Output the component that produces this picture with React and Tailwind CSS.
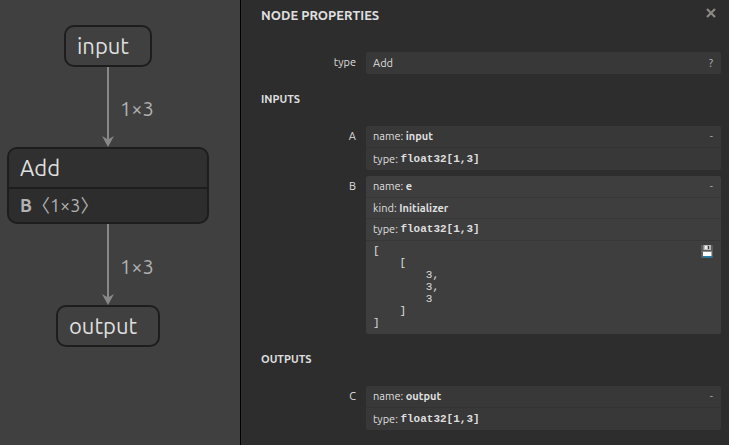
import React from "react";

function Edge({ className, label }) {
  return (
    <div className={`absolute w-3 ${className}`}>
      <svg className="h-full w-full overflow-visible" aria-hidden="true">
        <path d="M6 0V76" stroke="#888888" strokeWidth="2" />
        <path d="M0 70L6 81L12 70L6 73.500Z" fill="#888888" />
      </svg>
      <span className="absolute top-8 left-[18px] text-[20px] leading-[22px] text-[#b2b2b2]">{label}</span>
    </div>
  );
}

function GraphNode({ className, children }) {
  return (
    <div className={`absolute overflow-hidden rounded-[10px] border-2 border-[#1d1d1d] text-[22px] leading-[38px] text-[#dfdfdf] ${className}`}>
      {children}
    </div>
  );
}

function Graph() {
  return (
    <main className="relative w-[241px] shrink-0 border-r border-black bg-[#404040]">
      <Edge className="top-[66px] left-[102px] h-[81px]" label="1×3" />
      <Edge className="top-[224px] left-[102px] h-[81px]" label="1×3" />
      <GraphNode className="top-[25px] left-16 w-[88px] pl-[11px]">input</GraphNode>
      <GraphNode className="top-[147px] left-[7px] w-[202px] bg-[#2d2d2d]">
        <div className="border-b-2 border-[#1d1d1d] bg-[#303030] pl-[11px]">Add</div>
        <div className="pl-[11px] text-[18px] leading-[33px] text-[#b2b2b2]">
          <b>B</b>
          {"〈1×3〉"}
        </div>
      </GraphNode>
      <GraphNode className="top-[305px] left-14 w-[104px] pl-[11px]">output</GraphNode>
    </main>
  );
}

function Property({ label, children }) {
  return (
    <div className="flex">
      <dt className="w-[95px] shrink-0 text-right leading-5">{label}</dt>
      <dd className="ml-[10px] min-w-0 flex-1">{children}</dd>
    </div>
  );
}

function Row({ name, value, mono, compact, toggle }) {
  return (
    <div className={`flex items-center px-[7px] ${compact ? "h-[21px]" : "h-[22px]"}`}>
      <span>{name}:&nbsp;</span>
      <b className={mono ? "font-['Liberation_Mono',monospace]" : ""}>{value}</b>
      {toggle && <button type="button" aria-label="Collapse" className="ml-auto pr-px text-[#aaaaaa]">-</button>}
    </div>
  );
}

function Floppy() {
  return (
    <svg viewBox="0 0 12 13" className="h-[13px] w-3" aria-hidden="true">
      <rect width="12" height="13" rx="1" fill="#5b5b5b" />
      <rect x="2.500" y="0" width="7.500" height="5" fill="#b8b8b8" />
      <rect x="4" y="1" width="2" height="3" fill="#eeeeee" />
      <rect x="7" y="1" width="1" height="3" fill="#333333" />
      <rect x="1.500" y="6" width="9.500" height="1" fill="#8c8c8c" />
      <rect x="2" y="7" width="8.500" height="4" fill="#ffffff" />
      <rect x="2" y="11" width="8.500" height="1.500" fill="#1685b5" />
    </svg>
  );
}

const tensor = `[
    [
        3,
        3,
        3
    ]
]`;

function Sidebar() {
  return (
    <aside className="min-w-0 flex-1 bg-[#2d2d2d] pr-2 pl-5 text-[11px] text-[#dfdfdf]">
      <header className="flex h-[52px] items-start justify-between">
        <h1 className="pt-[5px] text-[13px] leading-5 font-semibold">NODE PROPERTIES</h1>
        <button type="button" aria-label="Close" className="mt-2 mr-[5px]">
          <svg viewBox="0 0 10 10" className="size-[10px]" aria-hidden="true">
            <path d="M1 1L9 9M9 1L1 9" stroke="#8c8a86" strokeWidth="2.200" />
          </svg>
        </button>
      </header>
      <dl>
        <Property label="type">
          <div className="flex h-[22px] items-center justify-between rounded-xs bg-[#383838] px-[7px]">
            <span>Add</span>
            <button type="button" aria-label="Documentation" className="pr-px text-[#b8b8b8]">?</button>
          </div>
        </Property>
      </dl>
      <h2 className="mt-[15px] mb-[17px] leading-5 font-bold">INPUTS</h2>
      <dl className="flex flex-col gap-[6px]">
        <Property label="A">
          <div className="divide-y divide-[#333333] rounded-xs bg-[#383838]">
            <Row name="name" value="input" toggle />
            <Row name="type" value="float32[1,3]" mono />
          </div>
        </Property>
        <Property label="B">
          <div className="divide-y divide-[#373737] rounded-xs bg-[#3e3e3e]">
            <Row name="name" value="e" toggle />
            <Row name="kind" value="Initializer" compact />
            <Row name="type" value="float32[1,3]" mono />
            <div className="flex items-start justify-between px-[7px] pt-1 pb-[5px]">
              <pre className="font-['Liberation_Mono',monospace] leading-3">{tensor}</pre>
              <button type="button" aria-label="Save tensor" className="mr-px">
                <Floppy />
              </button>
            </div>
          </div>
        </Property>
      </dl>
      <h2 className="mt-[15px] mb-[17px] leading-5 font-bold">OUTPUTS</h2>
      <dl>
        <Property label="C">
          <div className="divide-y divide-[#333333] rounded-xs bg-[#383838]">
            <Row name="name" value="output" toggle />
            <Row name="type" value="float32[1,3]" mono />
          </div>
        </Property>
      </dl>
    </aside>
  );
}

export default function App() {
  return (
    <div className="flex min-h-screen font-['Ubuntu','Noto_Sans','Noto_Sans_CJK_SC',sans-serif]">
      <Graph />
      <Sidebar />
    </div>
  );
}
